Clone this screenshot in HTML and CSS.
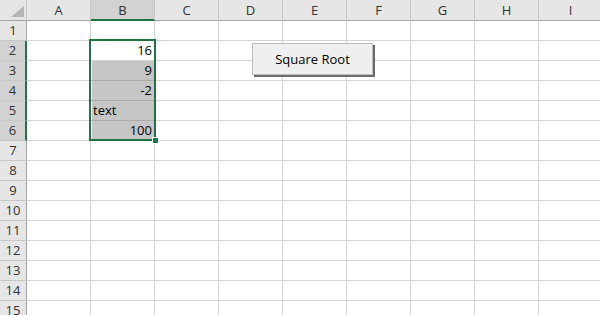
FILE: index.html
```html
<!DOCTYPE html>
<html lang="en">
<head>
  <meta charset="UTF-8">
  <meta name="viewport" content="width=device-width, initial-scale=1.0">
  <title>Square Root</title>
  <link rel="stylesheet" href="styles.css">
</head>
<body>
  <div class="workbook">
    <div class="sheet">
      <!-- column headers -->
      <div class="hd corner">
        <svg width="26" height="20" viewBox="0 0 26 20"><polygon points="24,6 24,17 11,17" fill="#b5b5b5"/></svg>
      </div>
      <div class="hd col">A</div>
      <div class="hd col sel-col">B</div>
      <div class="hd col">C</div>
      <div class="hd col">D</div>
      <div class="hd col">E</div>
      <div class="hd col">F</div>
      <div class="hd col">G</div>
      <div class="hd col">H</div>
      <div class="hd col">I</div>

      <div class="hd row">1</div>
      <div class="cell"></div><div class="cell"></div><div class="cell"></div><div class="cell"></div><div class="cell"></div><div class="cell"></div><div class="cell"></div><div class="cell"></div><div class="cell"></div>

      <div class="hd row sel-row">2</div>
      <div class="cell"></div><div class="cell num">16</div><div class="cell"></div><div class="cell"></div><div class="cell"></div><div class="cell"></div><div class="cell"></div><div class="cell"></div><div class="cell"></div>

      <div class="hd row sel-row">3</div>
      <div class="cell"></div><div class="cell num shade">9</div><div class="cell"></div><div class="cell"></div><div class="cell"></div><div class="cell"></div><div class="cell"></div><div class="cell"></div><div class="cell"></div>

      <div class="hd row sel-row">4</div>
      <div class="cell"></div><div class="cell num shade">-2</div><div class="cell"></div><div class="cell"></div><div class="cell"></div><div class="cell"></div><div class="cell"></div><div class="cell"></div><div class="cell"></div>

      <div class="hd row sel-row">5</div>
      <div class="cell"></div><div class="cell shade">text</div><div class="cell"></div><div class="cell"></div><div class="cell"></div><div class="cell"></div><div class="cell"></div><div class="cell"></div><div class="cell"></div>

      <div class="hd row sel-row">6</div>
      <div class="cell"></div><div class="cell num shade">100</div><div class="cell"></div><div class="cell"></div><div class="cell"></div><div class="cell"></div><div class="cell"></div><div class="cell"></div><div class="cell"></div>

      <div class="hd row">7</div>
      <div class="cell"></div><div class="cell"></div><div class="cell"></div><div class="cell"></div><div class="cell"></div><div class="cell"></div><div class="cell"></div><div class="cell"></div><div class="cell"></div>

      <div class="hd row">8</div>
      <div class="cell"></div><div class="cell"></div><div class="cell"></div><div class="cell"></div><div class="cell"></div><div class="cell"></div><div class="cell"></div><div class="cell"></div><div class="cell"></div>

      <div class="hd row">9</div>
      <div class="cell"></div><div class="cell"></div><div class="cell"></div><div class="cell"></div><div class="cell"></div><div class="cell"></div><div class="cell"></div><div class="cell"></div><div class="cell"></div>

      <div class="hd row">10</div>
      <div class="cell"></div><div class="cell"></div><div class="cell"></div><div class="cell"></div><div class="cell"></div><div class="cell"></div><div class="cell"></div><div class="cell"></div><div class="cell"></div>

      <div class="hd row">11</div>
      <div class="cell"></div><div class="cell"></div><div class="cell"></div><div class="cell"></div><div class="cell"></div><div class="cell"></div><div class="cell"></div><div class="cell"></div><div class="cell"></div>

      <div class="hd row">12</div>
      <div class="cell"></div><div class="cell"></div><div class="cell"></div><div class="cell"></div><div class="cell"></div><div class="cell"></div><div class="cell"></div><div class="cell"></div><div class="cell"></div>

      <div class="hd row">13</div>
      <div class="cell"></div><div class="cell"></div><div class="cell"></div><div class="cell"></div><div class="cell"></div><div class="cell"></div><div class="cell"></div><div class="cell"></div><div class="cell"></div>

      <div class="hd row">14</div>
      <div class="cell"></div><div class="cell"></div><div class="cell"></div><div class="cell"></div><div class="cell"></div><div class="cell"></div><div class="cell"></div><div class="cell"></div><div class="cell"></div>

      <div class="hd row">15</div>
      <div class="cell"></div><div class="cell"></div><div class="cell"></div><div class="cell"></div><div class="cell"></div><div class="cell"></div><div class="cell"></div><div class="cell"></div><div class="cell"></div>

      <div class="hd row">16</div>
      <div class="cell"></div><div class="cell"></div><div class="cell"></div><div class="cell"></div><div class="cell"></div><div class="cell"></div><div class="cell"></div><div class="cell"></div><div class="cell"></div>
    </div>

    <!-- selected range B2:B6 -->
    <div class="selection"><span class="fill-handle"></span></div>

    <button class="macro-btn" type="button">Square Root</button>
  </div>
</body>
</html>
```

FILE: styles.css
```css
* {
  box-sizing: border-box;
}

body {
  margin: 0;
  font-family: "Open Sans", "Liberation Sans", sans-serif;
  font-size: 13px;
  color: #000;
  background: #fff;
  overflow: hidden;
}

.workbook {
  position: relative;
  width: 600px;
  height: 315px;
  overflow: hidden;
}

.sheet {
  display: grid;
  grid-template-columns: 27px repeat(9, 64px);
  grid-template-rows: 21px;
  grid-auto-rows: 20px;
  width: 603px;
}

/* headers */
.hd {
  background: #e6e6e6;
  color: #333;
  text-align: center;
  line-height: 19px;
  border-right: 1px solid #c6c6c6;
  border-bottom: 1px solid #c6c6c6;
}

.hd.col {
  line-height: 20px;
  border-bottom-color: #a3a3a3;
}

.hd.row {
  border-right-color: #a3a3a3;
}

.corner {
  border-bottom-color: #a3a3a3;
  border-right-color: #c6c6c6;
}

.corner svg {
  display: block;
}

.sel-col {
  background: #d2d2d2;
  border-bottom: 2px solid #217346 !important;
}

.sel-row {
  background: #d2d2d2;
  border-right: 2px solid #217346 !important;
}

/* cells */
.cell {
  padding: 0 2px;
  line-height: 19px;
  white-space: nowrap;
  border-right: 1px solid #d4d4d4;
  border-bottom: 1px solid #d4d4d4;
}

.num {
  text-align: right;
}

.shade {
  background: #c6c6c6;
  border-bottom-color: #ababab;
  box-shadow: inset 1px 0 #fff;
}

.selection {
  position: absolute;
  left: 89px;
  top: 39px;
  width: 67px;
  height: 102px;
  border: 2px solid #217346;
}

.fill-handle {
  position: absolute;
  right: -5px;
  bottom: -5px;
  width: 7px;
  height: 7px;
  background: #217346;
  border: 1px solid #fff;
}

.macro-btn {
  position: absolute;
  left: 252px;
  top: 43px;
  width: 121px;
  height: 32px;
  padding: 0;
  font-family: inherit;
  font-size: 13px;
  color: #000;
  background: #efefef;
  border: 1px solid #bdbdbd;
  border-radius: 0;
  box-shadow: 2px 2px 0 #6b6b6b;
}
```
